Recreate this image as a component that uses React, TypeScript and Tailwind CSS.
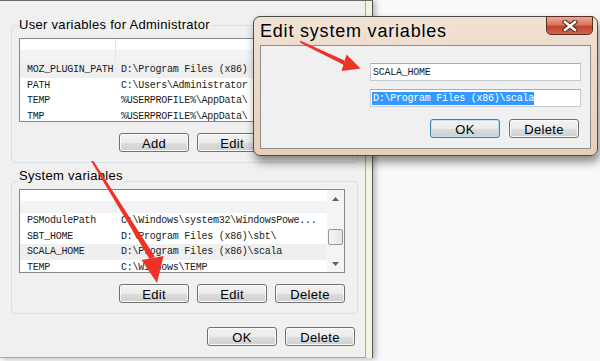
import React from 'react';

type Row = { name: string; value: string; hi?: boolean };

// values past x=253 sit under the edit dialog, so only the visible part is kept
const userRows: Row[] = [
  { name: 'MOZ_PLUGIN_PATH', value: 'D:\\Program Files (x86)', hi: true },
  { name: 'PATH', value: 'C:\\Users\\Administrator' },
  { name: 'TEMP', value: '%USERPROFILE%\\AppData\\' },
  { name: 'TMP', value: '%USERPROFILE%\\AppData\\' },
];

const systemRows: Row[] = [
  { name: 'PSModulePath', value: 'C:\\Windows\\system32\\WindowsPowe...' },
  { name: 'SBT_HOME', value: 'D:\\Program Files (x86)\\sbt\\' },
  { name: 'SCALA_HOME', value: 'D:\\Program Files (x86)\\scala', hi: true },
  { name: 'TEMP', value: 'C:\\Windows\\TEMP' },
];

const btn =
  'w-[70px] h-[19px] rounded-[3px] border border-[#707070] bg-[linear-gradient(#f3f3f3_0%,#ebebeb_50%,#dddddd_51%,#cfcfcf_100%)] shadow-[inset_0_0_0_1px_#fbfbfb] text-[13px] tracking-[0.3px] leading-[17px] text-black flex items-center justify-center pt-[1px]';

function Button({ label, focused }: { label: string; focused?: boolean }) {
  if (focused) {
    return (
      <div className="w-[70px] h-[19px] rounded-[3px] border border-[#3c7fb1] bg-[linear-gradient(#f3f3f3_0%,#ebebeb_50%,#dddddd_51%,#cfcfcf_100%)] shadow-[inset_0_0_0_1px_#bfe2f7] text-[13px] tracking-[0.3px] leading-[17px] text-black flex items-center justify-center pt-[1px]">
        {label}
      </div>
    );
  }
  return <div className={btn}>{label}</div>;
}

function ListBox({ rows, scroll }: { rows: Row[]; scroll?: boolean }) {
  return (
    <div className="w-[326px] h-[84px] border border-[#828790] bg-white flex overflow-hidden">
      <div className="flex-1 flex flex-col overflow-hidden">
        {/* column header */}
        <div className="h-[23px] shrink-0 flex bg-[linear-gradient(#ffffff_0%,#ffffff_45%,#f2f3f5_50%,#f2f3f5_100%)]">
          <div className="w-[96px] border-r border-[#e3e4e6]" />
          <div className="flex-1" />
        </div>
        {rows.map((r) => (
          <div
            key={r.name}
            className={
              r.hi
                ? 'h-[15.5px] shrink-0 flex items-center bg-[#efefef] font-["Liberation_Mono",monospace] text-[10px] tracking-[-0.25px] text-[#1a1a1a] whitespace-nowrap'
                : 'h-[15.5px] shrink-0 flex items-center font-["Liberation_Mono",monospace] text-[10px] tracking-[-0.25px] text-[#1a1a1a] whitespace-nowrap'
            }
          >
            <span className="w-[101px] shrink-0 pl-[7px]">{r.name}</span>
            <span>{r.value}</span>
          </div>
        ))}
      </div>
      {scroll && (
        <div className="w-[17px] shrink-0 bg-[#f5f5f5] flex flex-col items-center">
          <div className="h-[17px] flex items-center justify-center">
            <svg width="7" height="4" viewBox="0 0 7 4">
              <path d="M0 4 L3.5 0 L7 4 Z" fill="#606060" />
            </svg>
          </div>
          <div className="mt-[22px] w-[15px] h-[16px] rounded-[2px] border border-[#979797] bg-[linear-gradient(90deg,#f4f4f4,#e6e6e6)]" />
          <div className="flex-1" />
          <div className="h-[17px] flex items-center justify-center">
            <svg width="7" height="4" viewBox="0 0 7 4">
              <path d="M0 0 L3.5 4 L7 0 Z" fill="#606060" />
            </svg>
          </div>
        </div>
      )}
    </div>
  );
}

function GroupBox({
  title,
  rows,
  buttons,
  scroll,
  labelClass,
  className,
}: {
  title: string;
  rows: Row[];
  buttons: string[];
  scroll?: boolean;
  labelClass: string;
  className: string;
}) {
  return (
    <div className={className}>
      <span className={labelClass}>{title}</span>
      <div className="ml-[7px] mt-[6px] w-[326px] flex flex-col">
        <ListBox rows={rows} scroll={scroll} />
        <div className="mt-[11px] flex justify-end gap-[8px]">
          {buttons.map((b, i) => (
            <Button key={i} label={b} />
          ))}
        </div>
      </div>
    </div>
  );
}

export default function App() {
  return (
    <div className="relative w-[600px] h-[361px] overflow-hidden bg-[#f9f9f9] font-['Liberation_Sans',Arial,sans-serif] text-black">
      {/* Environment variables window */}
      <div className="flex w-[373px] h-[358px] border-t border-[#6a6a6a] shadow-[3px_1px_5px_rgba(0,0,0,0.25)]">
        <div className="flex-1 flex flex-col bg-[#f0f0f0] border-r border-b border-[#a9a9a9] pl-[11px] pr-[7px] pt-[24px]">
          <GroupBox
            title="User variables for Administrator"
            rows={userRows}
            buttons={['Add', 'Edit', 'Delete']}
            className="flex flex-col border border-[#d5dfe5] rounded-[4px] pb-[10px]"
            labelClass="-mt-[8px] ml-[6px] px-[1px] self-start bg-[#f0f0f0] text-[13px] tracking-[0.3px] leading-[14px]"
          />
          <GroupBox
            title="System variables"
            rows={systemRows}
            buttons={['Edit', 'Edit', 'Delete']}
            scroll
            className="mt-[18px] flex flex-col border border-[#d5dfe5] rounded-[4px] pb-[10px]"
            labelClass="-mt-[13px] ml-[6px] px-[1px] self-start bg-[#f0f0f0] text-[13px] tracking-[0.3px] leading-[14px]"
          />
          <div className="mt-[13px] mr-[3px] flex justify-end gap-[8px]">
            <Button label="OK" />
            <Button label="Delete" />
          </div>
        </div>
        <div className="w-[7px] bg-[#f5f2dd] border-r border-[#555555]" />
      </div>

      {/* Edit system variables dialog */}
      <div className="absolute left-[253px] top-[16px] w-[345px] h-[140px] rounded-[7px] border border-[#4a4a4a] bg-[linear-gradient(#f0e1d3,#e7cfba)] shadow-[2px_6px_10px_rgba(0,0,0,0.45)] flex flex-col px-[6px] pb-[6px]">
        <div className="h-[28px] shrink-0 flex items-start justify-between">
          <span className="leading-[28px] text-[18px] tracking-[0.8px] [text-shadow:0_0_8px_#f7efe8]">
            Edit system variables
          </span>
          <div className="-mt-[1px] -mr-[2px] w-[47px] h-[19px] rounded-b-[5px] border border-[#5b2c22] bg-[linear-gradient(#eaa996_0%,#d9775f_45%,#c4412a_55%,#d4634a_100%)] flex items-center justify-center">
            <svg width="16" height="12" viewBox="0 0 16 12">
              <path d="M3 2 L13 10 M13 2 L3 10" stroke="#4a2018" strokeWidth="4.5" strokeLinecap="square" />
              <path d="M3 2 L13 10 M13 2 L3 10" stroke="#ffffff" strokeWidth="2.6" strokeLinecap="square" />
            </svg>
          </div>
        </div>
        <div className="flex-1 bg-[#f0f0f0] border border-[#8e8e8e] flex flex-col items-end pr-[9px] pt-[17px]">
          <div className="w-[211px] h-[18px] border border-[#c5c9d0] border-t-[#abadb3] bg-white pl-[2px] flex items-center font-['Liberation_Mono',monospace] text-[10px] tracking-[-0.25px] text-[#1a1a1a]">
            SCALA_HOME
          </div>
          <div className="mt-[8px] w-[211px] h-[18px] border border-[#c5c9d0] border-t-[#abadb3] bg-white pl-[1px] flex items-center font-['Liberation_Mono',monospace] text-[10px] tracking-[-0.25px]">
            <span className="bg-[#3399ff] text-white pl-[1px] leading-[13px]">D:\Program Files (x86)\scala</span>
          </div>
          <div className="mt-[12px] mr-[2px] flex gap-[9px]">
            <Button label="OK" focused />
            <Button label="Delete" />
          </div>
        </div>
      </div>

      {/* red annotation arrows */}
      <svg className="absolute inset-0 pointer-events-none" width="600" height="361" viewBox="0 0 600 361">
        <polygon points="91,161 93.5,161 155,257 149.5,259" fill="#ee3228" />
        <polygon points="141.5,260 163.5,256 157,283" fill="#ee3228" />
        <polygon points="300,40.5 300.5,43 344,65 344.5,60.5" fill="#ee3228" />
        <polygon points="346.5,54.5 341.5,71 360.5,68.5" fill="#ee3228" />
      </svg>
    </div>
  );
}
